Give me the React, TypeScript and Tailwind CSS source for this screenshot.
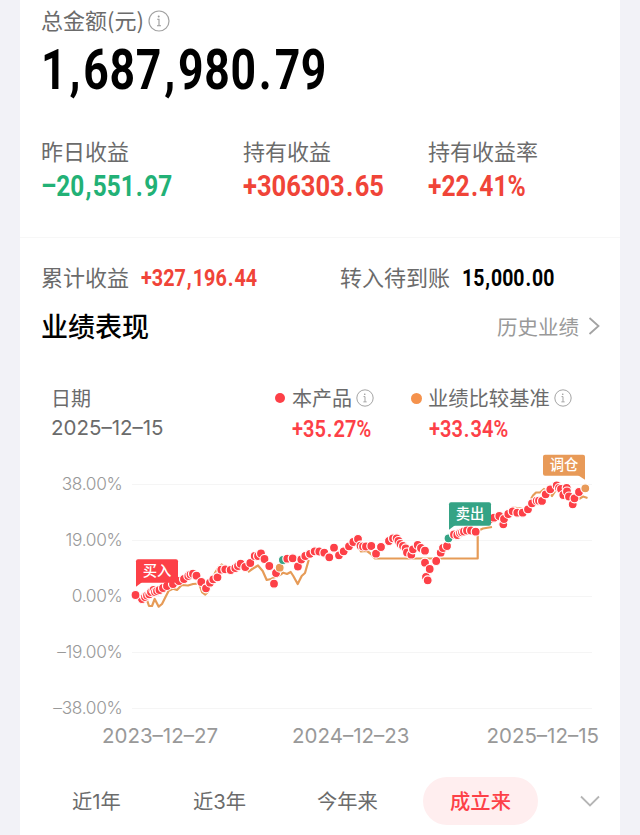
type DotTone = 'red' | 'green' | 'orange';

const toneColors: Record<DotTone, string> = {
  red: '#fd4047',
  green: '#35a385',
  orange: '#e89a58',
};

const CHART_TOP = 446;

const gridLines = [
  { y: 484, label: '38.00%' },
  { y: 540, label: '19.00%' },
  { y: 596, label: '0.00%' },
  { y: 652, label: '–19.00%' },
  { y: 708, label: '–38.00%' },
];

const dots: [number, number, DotTone?][] = [
  [142, 599], [135.5, 595], [145, 597], [147, 595.5], [149.3, 594.3], [151, 592], [153.5, 590], [155, 592], [157, 591], [159.5, 590], [163, 588], [167, 586],
  [173, 584], [179, 581], [184, 579], [188.3, 576], [190.5, 574.5], [193, 573.7], [196.5, 575.7], [201.3, 582], [206, 588.3],
  [210, 582.7], [213.3, 579.3], [217.5, 577.3], [221.3, 569.7], [225.3, 569.3], [230.7, 570], [235.3, 568],
  [238, 566], [240.7, 563.7], [245.3, 567], [250.3, 563], [254.7, 556], [258, 556], [261, 553.5], [264.5, 559], [269.3, 566],
  [276, 573], [274, 583.7], [279.7, 567.7, 'orange'], [282.9, 560, 'green'], [287.3, 558.7], [292.7, 558.3],
  [297.9, 566.5], [301.3, 559.5], [305.3, 556], [310, 553.8], [314.7, 551.3], [319.3, 551.5], [324.3, 552.7],
  [329.3, 557.3], [334, 547.7], [339, 555.3], [343.7, 551.3], [349, 546.3], [353.3, 542], [358, 539],
  [360.5, 545.7], [363, 546.5], [366, 546.5], [371.3, 546], [376, 553.7], [381, 547], [389, 541], [393, 538.3], [396.7, 538.3],
  [398.5, 541], [400.5, 544], [403, 546], [405.7, 548.3], [407, 552.5], [411.3, 554.7], [413, 549.3], [417.7, 545],
  [421, 548], [425, 550.7], [425, 562.7], [426, 577], [427.7, 580.3], [429.7, 569], [436.2, 561], [440.7, 552.7],
  [443, 548], [447, 546], [448.5, 538.3, 'green'], [454, 534.5], [457.3, 535], [460, 533], [462, 532.3], [464, 531.5],
  [467, 530.5], [471, 530.5], [475.7, 531.7], [490, 519], [494, 517.7], [499.3, 516], [503.3, 524.3],
  [504, 519], [508.3, 514], [512.7, 511.3], [517.3, 512.7], [522.7, 512.7], [528, 509.3], [532, 503.3],
  [536.7, 500.7], [539, 500.7], [542, 500.9], [545.7, 494.3], [550.3, 489.3], [556.7, 485.4], [559, 488], [561, 489], [566.7, 487.8],
  [563.3, 495], [567, 491.5], [569, 496.5], [572.7, 504.3], [574.5, 498.3], [579, 492], [585.3, 488.3, 'orange'],
];

const benchmarkLines = [
  '146,597 149,606 152,606 154.7,599 158.7,606.7 162,604 166,596 168.7,590.7 173,588.7 177,590 181.7,585 188,585.5 193,584 199,583.5 202,592 205.3,594.5 208.7,591 215,573 218.3,567.5 221.7,564.5 226,568',
  '248,572 253,568.5 258,565.5 262.7,571 266.7,580 271,579 280,575 283.3,572.7 287,574 290.7,572 293.3,576 297.7,584 301.7,576 305,573 308.7,560',
  '358,546 361,551.5 367,551 371,554 375,558.5 477.7,558.5 477.7,531 483,528.5 492,527',
  '510,510 513,507.5 521,508.5 525,510',
  '531,499 533,495.5 536,492.5 540,492.5 544,489 549,493 552,496 556,490',
  '579,499 583,496.5 587.5,498',
];

// Condensed figures with slightly wider punctuation
const Figure = ({ value, className }: { value: string; className: string }) => (
  <span className={`inline-block origin-left whitespace-nowrap font-[Roboto,sans-serif] ${className}`}>
    {value.split(/([,.])/).map((part, index) =>
      /^[,.]$/.test(part) ? (
        <span key={index} className="mx-[0.05em]">{part}</span>
      ) : (
        part
      ),
    )}
  </span>
);

const InfoIcon = ({ className }: { className: string }) => (
  <svg viewBox="0 0 22 22" fill="none" className={className}>
    <circle cx="11" cy="11" r="10" stroke="#a2a2a2" strokeWidth="1.2" />
    <circle cx="10.7" cy="6.4" r="1" fill="#9b9b9b" />
    <path d="M9.2 9.3H11V15.5M9 15.7H13" stroke="#9b9b9b" strokeWidth="1.1" />
  </svg>
);

const Flag = ({ x, y, height = 23.5, label, tone, tail }: {
  x: number;
  y: number;
  height?: number;
  label: string;
  tone: DotTone;
  tail: 'left' | 'right';
}) => (
  <g transform={`translate(${x} ${y})`}>
    <rect width="42" height={height} rx="2" fill={toneColors[tone]} />
    <path
      d={tail === 'left' ? `M0 ${height - 3}V${height + 4}L6 ${height - 0.5}Z` : `M42 ${height - 3}V${height + 4}L35 ${height - 0.5}Z`}
      fill={toneColors[tone]}
    />
    <text x="21" y={height / 2 + 4.6} textAnchor="middle" fontSize="14.3" fontWeight="500" fill="#fff">
      {label}
    </text>
  </g>
);

const PerformanceChart = () => (
  <svg viewBox={`20 ${CHART_TOP} 600 274`} className="block h-[274px] w-[600px] shrink-0">
    {gridLines.map((line) => (
      <g key={line.label}>
        <path d={`M132 ${line.y + 0.5}H592`} stroke="#f5f5f5" />
        <text
          x="122.5"
          y={line.y + 6}
          textAnchor="end"
          fontSize="17.3"
          fontWeight="300"
          fill="#999"
          className="font-[Inter,sans-serif] tracking-[-0.3px]"
        >
          {line.label}
        </text>
      </g>
    ))}
    {benchmarkLines.map((points) => (
      <polyline key={points} points={points} fill="none" stroke="#e69b57" strokeWidth="2.2" strokeLinejoin="round" />
    ))}
    {dots.map(([x, y, tone = 'red'], index) => (
      <circle key={index} cx={x} cy={y} r="4.5" fill={toneColors[tone]} stroke="#fff" strokeWidth="1.2" />
    ))}
    <Flag x={136} y={559.3} label="买入" tone="red" tail="left" />
    <Flag x={449} y={502.3} label="卖出" tone="green" tail="left" />
    <Flag x={543} y={454.7} height={21} label="调仓" tone="orange" tail="right" />
  </svg>
);

const App = () => {
  return (
    <div className="h-[835px] w-[640px] overflow-hidden bg-[#f2f2f7] px-5 font-['Noto_Sans_CJK_SC',sans-serif] text-[#6b6b6b]">
      <div className="flex h-full flex-col bg-white">
        {/* Total */}
        <div className="flex h-10 shrink-0 items-center gap-1 pl-[21px] text-[22px]">
          <span className="-mt-0.5 w-[103px] whitespace-nowrap">总金额(元)</span>
          <InfoIcon className="mt-0.5 size-[22px]" />
        </div>
        <div className="h-[60px] shrink-0 pl-[21px]">
          <Figure value="1,687,980.79" className="scale-x-[0.81] text-[55px] leading-[60px] font-bold tracking-[0.8px] text-black" />
        </div>

        {/* Earnings */}
        <div className="mt-[34px] grid h-[104px] shrink-0 grid-cols-[202px_185px_1fr] border-b border-[#f7f7f7] pl-[21px]">
          <div>
            <div className="text-[22px] leading-8">昨日收益</div>
            <Figure value="–20,551.97" className="mt-0.5 scale-x-[0.84] text-[29px] leading-9 font-bold text-[#22b176]" />
          </div>
          <div>
            <div className="text-[22px] leading-8">持有收益</div>
            <Figure value="+306303.65" className="mt-0.5 scale-x-[0.88] text-[29px] leading-9 font-bold text-[#f04438]" />
          </div>
          <div>
            <div className="text-[22px] leading-8">持有收益率</div>
            <Figure value="+22.41%" className="mt-0.5 scale-x-[0.85] text-[29px] leading-9 font-bold text-[#f04438]" />
          </div>
        </div>
        <div className="mt-[22px] flex h-9 shrink-0 items-center pl-[21px] text-[22px]">
          <span className="-mt-1 w-[100px]">累计收益</span>
          <span className="w-[199px]">
            <Figure value="+327,196.44" className="scale-x-[0.825] text-[24px] font-bold text-[#f04438]" />
          </span>
          <span className="-mt-1 w-[122px]">转入待到账</span>
          <Figure value="15,000.00" className="scale-x-[0.81] text-[24px] font-bold text-black" />
        </div>

        {/* Performance */}
        <div className="mt-2.5 flex h-10 shrink-0 items-center justify-between pr-5 pl-[21px]">
          <h2 className="text-[27px] font-medium text-black">业绩表现</h2>
          <div className="flex items-center gap-[9px] text-[20.5px] text-[#999]">
            历史业绩
            <svg viewBox="0 0 12 18" fill="none" className="h-[18px] w-3">
              <path d="M1.5 1L10.5 9L1.5 17" stroke="#a3a3a3" strokeWidth="1.8" />
            </svg>
          </div>
        </div>
        <div className="mt-9 grid h-[64px] shrink-0 grid-cols-[223px_137px_1fr] pl-[31px] text-[20px]">
          <div>
            <div className="leading-8">日期</div>
            <div className="font-[Inter,sans-serif] text-[20.5px] leading-7">2025–12–15</div>
          </div>
          <div>
            <div className="flex h-8 items-center">
              <span className="mr-[7px] ml-px size-2.5 rounded-full bg-[#fd4047]" />
              本产品
              <InfoIcon className="ml-1 size-[18px]" />
            </div>
            <Figure value="+35.27%" className="-mt-0.5 ml-[18px] scale-x-[0.87] text-[23px] leading-7 font-semibold text-[#fd4047]" />
          </div>
          <div>
            <div className="flex h-8 items-center text-[20.3px]">
              <span className="mr-1.5 size-[11px] rounded-full bg-[#f5924c]" />
              <span className="-mt-0.5">业绩比较基准</span>
              <InfoIcon className="ml-1 size-[18px]" />
            </div>
            <Figure value="+33.34%" className="-mt-0.5 ml-[18px] scale-x-[0.87] text-[23px] leading-7 font-semibold text-[#fd4047]" />
          </div>
        </div>
        <PerformanceChart />
        <div className="flex h-8 shrink-0 items-center justify-between pr-[21px] pl-[82px] font-[Inter,sans-serif] text-[20.5px] text-[#999]">
          <span>2023–12–27</span>
          <span className="-ml-[3px]">2024–12–23</span>
          <span>2025–12–15</span>
        </div>

        {/* Range tabs */}
        <div className="mt-[25px] flex h-12 shrink-0 items-center pl-[52px] font-[Inter,'Noto_Sans_CJK_SC',sans-serif] text-[20.3px]">
          <span className="mt-0.5 w-[121px]">近1年</span>
          <span className="mt-0.5 w-[124px]">近3年</span>
          <span className="mt-0.5 w-[106px]">今年来</span>
          <button className="h-12 w-[115px] rounded-full bg-[#ffeeef] pt-0.5 font-medium text-[#fd4047]">成立来</button>
          <svg viewBox="0 0 20 12" fill="none" className="ml-[42px] h-3 w-5">
            <path d="M1 1.5L10 10.5L19 1.5" stroke="#b5b5b5" strokeWidth="1.8" />
          </svg>
        </div>
      </div>
    </div>
  );
};

export default App;
